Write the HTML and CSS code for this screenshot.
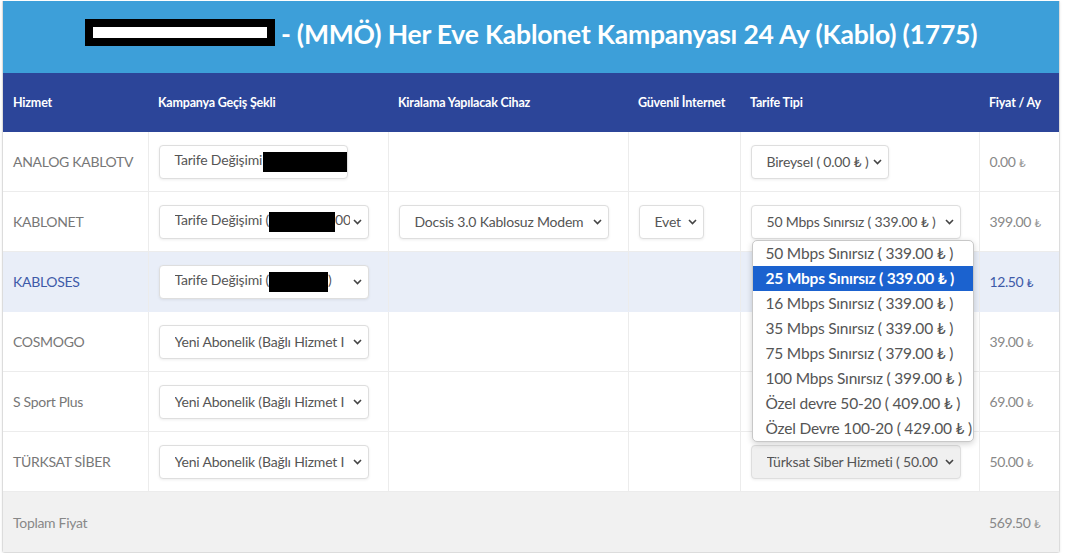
FILE: index.html
```html
<!DOCTYPE html>
<html lang="tr">
<head>
<meta charset="UTF-8">
<meta name="viewport" content="width=device-width, initial-scale=1.0">
<title>Her Eve Kablonet Kampanyası</title>
<link rel="stylesheet" href="styles.css">
</head>
<body>

<div class="card">
<div class="title">
<span class="redact"><span class="redact-inner"></span></span> - (MMÖ) Her Eve Kablonet Kampanyası 24 Ay (Kablo) (1775)
</div>

<table class="grid">
<colgroup>
<col class="c-service">
<col class="c-campaign">
<col class="c-device">
<col class="c-secure">
<col class="c-tariff">
<col class="c-price">
</colgroup>
<thead>
<tr>
<th>Hizmet</th>
<th>Kampanya Geçiş Şekli</th>
<th>Kiralama Yapılacak Cihaz</th>
<th>Güvenli İnternet</th>
<th>Tarife Tipi</th>
<th>Fiyat / Ay</th>
</tr>
</thead>
<tbody>
<tr>
<td class="service">ANALOG KABLOTV</td>
<td>
<div class="select w-189">
<span class="val open">Tarife Değişimi<span class="bar bar-1"></span></span>
</div>
</td>
<td></td>
<td></td>
<td>
<div class="select w-138">
<span class="val">Bireysel ( 0.00 ₺ )</span>
<svg class="chev" width="9" height="6" viewBox="0 0 9 6"><path d="M1 1l3.5 3.5L8 1" fill="none" stroke="#444" stroke-width="1.6"/></svg>
</div>
</td>
<td class="price">0.00 <span class="tl">₺</span></td>
</tr>
<tr>
<td class="service">KABLONET</td>
<td>
<div class="select">
<span class="val">Tarife Değişimi (<span class="bar bar-2"></span>00</span>
<svg class="chev" width="9" height="6" viewBox="0 0 9 6"><path d="M1 1l3.5 3.5L8 1" fill="none" stroke="#444" stroke-width="1.6"/></svg>
</div>
</td>
<td>
<div class="select">
<span class="val">Docsis 3.0 Kablosuz Modem</span>
<svg class="chev" width="9" height="6" viewBox="0 0 9 6"><path d="M1 1l3.5 3.5L8 1" fill="none" stroke="#444" stroke-width="1.6"/></svg>
</div>
</td>
<td>
<div class="select w-65">
<span class="val">Evet</span>
<svg class="chev" width="9" height="6" viewBox="0 0 9 6"><path d="M1 1l3.5 3.5L8 1" fill="none" stroke="#444" stroke-width="1.6"/></svg>
</div>
</td>
<td>
<div class="select">
<span class="val">50 Mbps Sınırsız ( 339.00 ₺ )</span>
<svg class="chev" width="9" height="6" viewBox="0 0 9 6"><path d="M1 1l3.5 3.5L8 1" fill="none" stroke="#444" stroke-width="1.6"/></svg>
<ul class="dropdown">
<li>50 Mbps Sınırsız ( 339.00 ₺ )</li>
<li class="active">25 Mbps Sınırsız ( 339.00 ₺ )</li>
<li>16 Mbps Sınırsız ( 339.00 ₺ )</li>
<li>35 Mbps Sınırsız ( 339.00 ₺ )</li>
<li>75 Mbps Sınırsız ( 379.00 ₺ )</li>
<li>100 Mbps Sınırsız ( 399.00 ₺ )</li>
<li>Özel devre 50-20 ( 409.00 ₺ )</li>
<li>Özel Devre 100-20 ( 429.00 ₺ )</li>
</ul>
</div>
</td>
<td class="price">399.00 <span class="tl">₺</span></td>
</tr>
<tr class="highlight">
<td class="service">KABLOSES</td>
<td>
<div class="select">
<span class="val">Tarife Değişimi (<span class="bar bar-3"></span>)</span>
<svg class="chev" width="9" height="6" viewBox="0 0 9 6"><path d="M1 1l3.5 3.5L8 1" fill="none" stroke="#444" stroke-width="1.6"/></svg>
</div>
</td>
<td></td>
<td></td>
<td></td>
<td class="price">12.50 <span class="tl">₺</span></td>
</tr>
<tr>
<td class="service">COSMOGO</td>
<td>
<div class="select">
<span class="val">Yeni Abonelik (Bağlı Hizmet I</span>
<svg class="chev" width="9" height="6" viewBox="0 0 9 6"><path d="M1 1l3.5 3.5L8 1" fill="none" stroke="#444" stroke-width="1.6"/></svg>
</div>
</td>
<td></td>
<td></td>
<td></td>
<td class="price">39.00 <span class="tl">₺</span></td>
</tr>
<tr>
<td class="service">S Sport Plus</td>
<td>
<div class="select">
<span class="val">Yeni Abonelik (Bağlı Hizmet I</span>
<svg class="chev" width="9" height="6" viewBox="0 0 9 6"><path d="M1 1l3.5 3.5L8 1" fill="none" stroke="#444" stroke-width="1.6"/></svg>
</div>
</td>
<td></td>
<td></td>
<td></td>
<td class="price">69.00 <span class="tl">₺</span></td>
</tr>
<tr>
<td class="service">TÜRKSAT SİBER</td>
<td>
<div class="select">
<span class="val">Yeni Abonelik (Bağlı Hizmet I</span>
<svg class="chev" width="9" height="6" viewBox="0 0 9 6"><path d="M1 1l3.5 3.5L8 1" fill="none" stroke="#444" stroke-width="1.6"/></svg>
</div>
</td>
<td></td>
<td></td>
<td>
<div class="select disabled">
<span class="val">Türksat Siber Hizmeti ( 50.00</span>
<svg class="chev" width="9" height="6" viewBox="0 0 9 6"><path d="M1 1l3.5 3.5L8 1" fill="none" stroke="#444" stroke-width="1.6"/></svg>
</div>
</td>
<td class="price">50.00 <span class="tl">₺</span></td>
</tr>
</tbody>
<tfoot>
<tr>
<td colspan="5" class="total-label">Toplam Fiyat</td>
<td class="price">569.50 <span class="tl">₺</span></td>
</tr>
</tfoot>
</table>
</div>

</body>
</html>
```

FILE: styles.css
```css
body {
margin: 0;
padding-top: 1px;
font-family: "Lato", "DejaVu Sans", sans-serif;
background: #fff;
}
.card {
box-sizing: border-box;
width: 1058px;
margin-left: 2px;
border: 1px solid #dcdcdc;
border-top: none;
border-radius: 0 0 3px 3px;
box-shadow: 0 1px 3px rgba(0,0,0,0.08);
}
.title {
height: 72px;
box-sizing: border-box;
padding-top: 14px;
line-height: 38px;
background: #3d9fd9;
color: #fff;
font-size: 26.5px;
font-weight: 700;
text-align: center;
letter-spacing: -0.2px;
}
.redact {
display: inline-block;
vertical-align: top;
margin-top: 4px;
width: 190px;
height: 27px;
box-sizing: border-box;
padding: 8px 8px 0;
background: #000;
}
.redact-inner {
display: block;
height: 11px;
background: #fff;
}
.grid {
width: 1056px;
border-collapse: collapse;
table-layout: fixed;
}
.c-service { width: 145px; }
.c-campaign { width: 240px; }
.c-device { width: 240px; }
.c-secure { width: 112px; }
.c-tariff { width: 239px; }
.c-price { width: 80px; }
th {
height: 59px;
padding: 0 10px;
background: #2c4599;
color: #fff;
font-size: 12.5px;
font-weight: 700;
letter-spacing: -0.2px;
text-align: left;
}
td {
height: 59px;
padding: 0 10px;
border-right: 1px solid #ececec;
border-bottom: 1px solid #ececec;
vertical-align: middle;
}
td:last-child {
border-right: none;
}
.service {
font-size: 14px;
color: #777;
letter-spacing: -0.3px;
}
.price {
font-size: 14px;
color: #888;
letter-spacing: -0.4px;
}
.tl {
font-size: 12px;
color: #999;
}
.highlight td {
background: #e9eef8;
border-bottom-color: #e9eef8;
}
.highlight .service,
.highlight .price {
color: #3e5aa8;
}
.highlight .price .tl {
color: #3e5aa8;
}
.select {
position: relative;
display: flex;
align-items: center;
box-sizing: border-box;
width: 210px;
height: 34px;
padding: 0 6px 0 15px;
background: #fff;
border: 1px solid #dedede;
border-radius: 4px;
box-shadow: 0 1px 3px rgba(0,0,0,0.07);
font-size: 14px;
color: #555;
letter-spacing: -0.2px;
}
.w-189 { width: 189px; }
.w-138 { width: 138px; }
.w-65 { width: 65px; }
.select.disabled {
background: #f0f0f0;
}
.val {
flex: 1;
white-space: nowrap;
overflow: hidden;
}
.val.open {
overflow: visible;
}
.chev {
flex: none;
margin-left: 3px;
}
.bar {
display: inline-block;
vertical-align: middle;
height: 20px;
background: #000;
}
.bar-1 { width: 84px; margin-left: 1px; }
.bar-2 { width: 66px; }
.bar-3 { width: 59px; }
.dropdown {
position: absolute;
z-index: 5;
top: 34px;
left: 0;
width: 220px;
margin: 0;
padding: 0;
list-style: none;
background: #fff;
border: 1px solid #c8c8c8;
border-radius: 5px;
box-shadow: 0 2px 6px rgba(0,0,0,0.18);
overflow: hidden;
}
.dropdown li {
height: 25px;
line-height: 25px;
padding-left: 13px;
font-size: 15.5px;
color: #555;
white-space: nowrap;
}
.dropdown li.active {
background: #1b62cf;
color: #fff;
font-weight: 700;
}
tfoot td {
background: #f1f1f1;
border: none;
height: 60px;
}
.total-label {
font-size: 14px;
color: #888;
letter-spacing: -0.3px;
}
```
